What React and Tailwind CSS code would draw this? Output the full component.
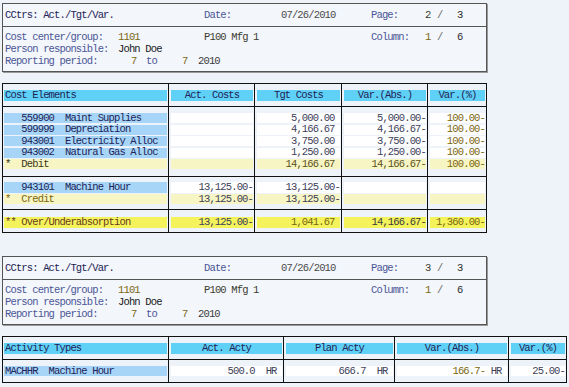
import React from "react";

const FONT = "font-['Liberation_Mono',monospace] text-[10.5px] tracking-[-0.85px] leading-none whitespace-pre";

const HB = "bg-[#60d1f6]";
const KB = "bg-[#a6d5f7]";
const WB = "bg-white";
const YB = "bg-[#f7f5c4]";
const YB2 = "bg-[#f4f35c]";

const NAVY = "text-[#1f2357]";
const NUM = "text-[#40405a]";
const OLV = "text-[#7a6610]";
const LBL = "text-[#4b5796]";
const BRN = "text-[#6b3b1a]";

function HeaderBox({ page }) {
  return (
    <div className={`w-[485px] border border-[#555] bg-[#f3f6fb] shadow-[1px_1px_0_#9a9a9a] ${FONT}`}>
      <div className="h-[22px] flex items-center pl-[2px]">
        <span className={`w-[199px] ${NAVY}`}>CCtrs: Act./Tgt/Var.</span>
        <span className={`w-[77px] ${LBL}`}>Date:</span>
        <span className="w-[90px] text-[#4a4a4a]">07/26/2010</span>
        <span className={`w-[54px] ${LBL}`}>Page:</span>
        <span className="w-[12px] text-[#3a3a2a]">{page}</span>
        <span className="w-[20px] text-[#6a6a6a]">/</span>
        <span className="text-[#2a2a2a]">3</span>
      </div>
      <div className="border-t border-[#555] h-[45px] pt-[4px] pl-[2px] flex flex-col">
        <div className="h-[12px] flex items-center">
          <span className={`w-[113px] ${LBL}`}>Cost center/group:</span>
          <span className={`w-[86px] ${OLV}`}>1101</span>
          <span className="w-[167px] text-[#3c3c30]">P100 Mfg 1</span>
          <span className={`w-[54px] ${LBL}`}>Column:</span>
          <span className={`w-[12px] ${OLV}`}>1</span>
          <span className="w-[20px] text-[#6a6a6a]">/</span>
          <span className="text-[#2a2a2a]">6</span>
        </div>
        <div className="h-[12px] flex items-center">
          <span className={`w-[113px] ${LBL}`}>Person responsible:</span>
          <span className="text-[#1a1a1a]">John Doe</span>
        </div>
        <div className="h-[12px] flex items-center">
          <span className={`w-[126px] ${LBL}`}>Reporting period:</span>
          <span className={`w-[15px] ${OLV}`}>7</span>
          <span className={`w-[36px] ${LBL}`}>to</span>
          <span className={`w-[16px] ${OLV}`}>7</span>
          <span className="text-[#3a3a3a]">2010</span>
        </div>
      </div>
    </div>
  );
}

// cell: [text, bg, color, align]
function Section({ widths, rows, pad, rowH, bandH, last }) {
  return (
    <div className={`flex ${last ? "" : "border-b border-[#111]"}`}>
      {widths.map((w, ci) => (
        <div
          key={ci}
          className={`${w} ${ci < widths.length - 1 ? "border-r border-[#111]" : ""} ${pad}`}
        >
          {rows.map((r, ri) => {
            const c = r[ci];
            return (
              <div key={ri} className={rowH}>
                {c ? (
                  <div
                    className={`${bandH} flex items-center ${ci === 0 ? "ml-[1px] mr-[1px] pl-[1px]" : "ml-[2px] mr-[1px]"} ${c[1]} ${c[2]} ${
                      c[3] === "r" ? "justify-end" : c[3] === "c" ? "justify-center" : "justify-start"
                    }`}
                  >
                    <span>{c[0]}</span>
                  </div>
                ) : null}
              </div>
            );
          })}
        </div>
      ))}
    </div>
  );
}

const W1 = ["w-[166px]", "w-[86px]", "w-[87px]", "w-[86px]", "w-[58px]"];
const W2 = ["w-[166px]", "w-[115px]", "w-[111px]", "w-[114px]", "w-[57px]"];

export default function App() {
  const h1 = [[
    ["Cost Elements", HB, NAVY, "l"],
    ["Act. Costs", HB, NAVY, "c"],
    ["Tgt Costs", HB, NAVY, "c"],
    ["Var.(Abs.)", HB, NAVY, "c"],
    ["Var.(%)", HB, NAVY, "c"],
  ]];
  const key = (t) => [t, KB, NAVY, "l"];
  const w = (t, col = NUM) => [t, WB, col, "r"];
  const y = (t, col = NUM) => [t, YB, col, "r"];
  const y2 = (t, col = NUM) => [t, YB2, col, "r"];
  const s1 = [
    [key("   559900  Maint Supplies"), w(""), w("5,000.00 "), w("5,000.00-"), w("100.00-", OLV)],
    [key("   599999  Depreciation"), w(""), w("4,166.67 "), w("4,166.67-"), w("100.00-", OLV)],
    [key("   943001  Electricity Alloc"), w(""), w("3,750.00 "), w("3,750.00-"), w("100.00-", OLV)],
    [key("   943002  Natural Gas Alloc"), w(""), w("1,250.00 "), w("1,250.00-"), w("100.00-", OLV)],
    [["*  Debit", YB, "text-[#3a3520]", "l"], y(""), y("14,166.67 ", "text-[#5a5020]"), y("14,166.67-", "text-[#5a5020]"), y("100.00-", OLV)],
  ];
  const s2 = [
    [key("   943101  Machine Hour"), w("13,125.00-"), w("13,125.00-"), w(""), w("")],
    [["*  Credit", YB, OLV, "l"], y("13,125.00-"), y("13,125.00-"), y(""), y("")],
  ];
  const s3 = [
    [["** Over/Underabsorption", YB2, BRN, "l"], y2("13,125.00-"), y2("1,041.67 ", OLV), y2("14,166.67-", "text-[#3a3a3a]"), y2("1,360.00-", OLV)],
  ];
  const h2 = [[
    ["Activity Types", HB, NAVY, "l"],
    ["Act. Acty", HB, NAVY, "c"],
    ["Plan Acty", HB, NAVY, "c"],
    ["Var.(Abs.)", HB, NAVY, "c"],
    ["Var.(%)", HB, NAVY, "c"],
  ]];
  const r2 = [[
    ["MACHHR  Machine Hour", KB, NAVY, "l"],
    w("500.0  HR "),
    w("666.7  HR "),
    [<><span className={OLV}>166.7-</span> HR </>, WB, NUM, "r"],
    w("25.00-"),
  ]];

  return (
    <div className="w-[569px] h-[387px] overflow-hidden bg-[#eef3fa] pl-[2px] pt-[3px]">
      <HeaderBox page="2" />

      <div className={`mt-[11px] w-[485px] border border-[#111] ${FONT}`}>
        <Section widths={W1} rows={h1} pad="pt-[6px] h-[22px]" rowH="h-[11px]" bandH="h-[11px]" />
        <Section widths={W1} rows={s1} pad="pt-[6px] h-[69px]" rowH="h-[11.5px]" bandH="h-[10px]" />
        <Section widths={W1} rows={s2} pad="pt-[5px] h-[32px]" rowH="h-[11.5px]" bandH="h-[10.5px]" />
        <Section widths={W1} rows={s3} pad="pt-[7px] h-[22px]" rowH="h-[11px]" bandH="h-[10.5px]" last />
      </div>

      <div className="mt-[23px]">
        <HeaderBox page="3" />
      </div>

      <div className={`mt-[11px] w-[565px] border border-[#111] ${FONT}`}>
        <Section widths={W2} rows={h2} pad="pt-[6px] h-[22px]" rowH="h-[11px]" bandH="h-[10.5px]" />
        <Section widths={W2} rows={r2} pad="pt-[6px] h-[22px]" rowH="h-[11px]" bandH="h-[10px]" last />
      </div>
    </div>
  );
}
